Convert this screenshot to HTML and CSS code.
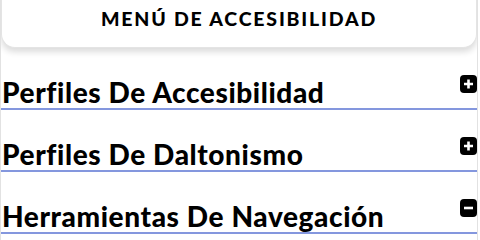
FILE: index.html
```html
<!DOCTYPE html>
<html lang="es">
<head>
<meta charset="utf-8">
<link rel="stylesheet" href="styles.css">
</head>
<body>
<div class="panel">
  <div class="card"><h1 class="title">MENÚ DE ACCESIBILIDAD</h1></div>
  <div class="row">
    <span class="label">Perfiles De Accesibilidad</span>
    <span class="toggle"><svg viewBox="0 0 17 18" width="17" height="18"><rect x="0" y="0" width="17" height="18" rx="4" fill="#000"/><path d="M8.5 4.5v9M4 9h9" stroke="#fff" stroke-width="2.6"/></svg></span>
  </div>
  <div class="row">
    <span class="label">Perfiles De Daltonismo</span>
    <span class="toggle"><svg viewBox="0 0 17 18" width="17" height="18"><rect x="0" y="0" width="17" height="18" rx="4" fill="#000"/><path d="M8.5 4.5v9M4 9h9" stroke="#fff" stroke-width="2.6"/></svg></span>
  </div>
  <div class="row">
    <span class="label">Herramientas De Navegación</span>
    <span class="toggle"><svg viewBox="0 0 17 18" width="17" height="18"><rect x="0" y="0" width="17" height="18" rx="4" fill="#000"/><path d="M4 9h9" stroke="#fff" stroke-width="2.6"/></svg></span>
  </div>
</div>
</body>
</html>
```

FILE: styles.css
```css
html, body {
  margin: 0;
  padding: 0;
  background: #fff;
}
.panel {
  width: 476px;
  height: 240px;
  border-left: 1px solid #e2e2e2;
  border-right: 1px solid #e2e2e2;
  overflow: hidden;
  font-family: "Lato", "DejaVu Sans", sans-serif;
  color: #000;
}
.card {
  margin-top: -14px;
  height: 61px;
  border: 1px solid #e4e4e4;
  border-top: none;
  border-radius: 0 0 14px 14px;
  box-shadow: 0 4px 6px rgba(0, 0, 0, 0.14);
  background: #fff;
  display: flex;
  align-items: flex-start;
  justify-content: center;
}
.title {
  margin: 22px 0 0;
  font-size: 19.5px;
  font-weight: 900;
  letter-spacing: 1.8px;
  line-height: 22px;
}
.row {
  height: 60px;
  border-bottom: 2px solid #8497de;
  display: flex;
  align-items: flex-end;
  justify-content: space-between;
  padding-left: 1px;
}
.label {
  font-size: 28px;
  font-weight: 900;
  line-height: 28px;
  letter-spacing: 0.6px;
  margin-bottom: 2px;
}
.toggle {
  display: flex;
  margin-bottom: 15px;
}
.toggle svg {
  display: block;
}
```
